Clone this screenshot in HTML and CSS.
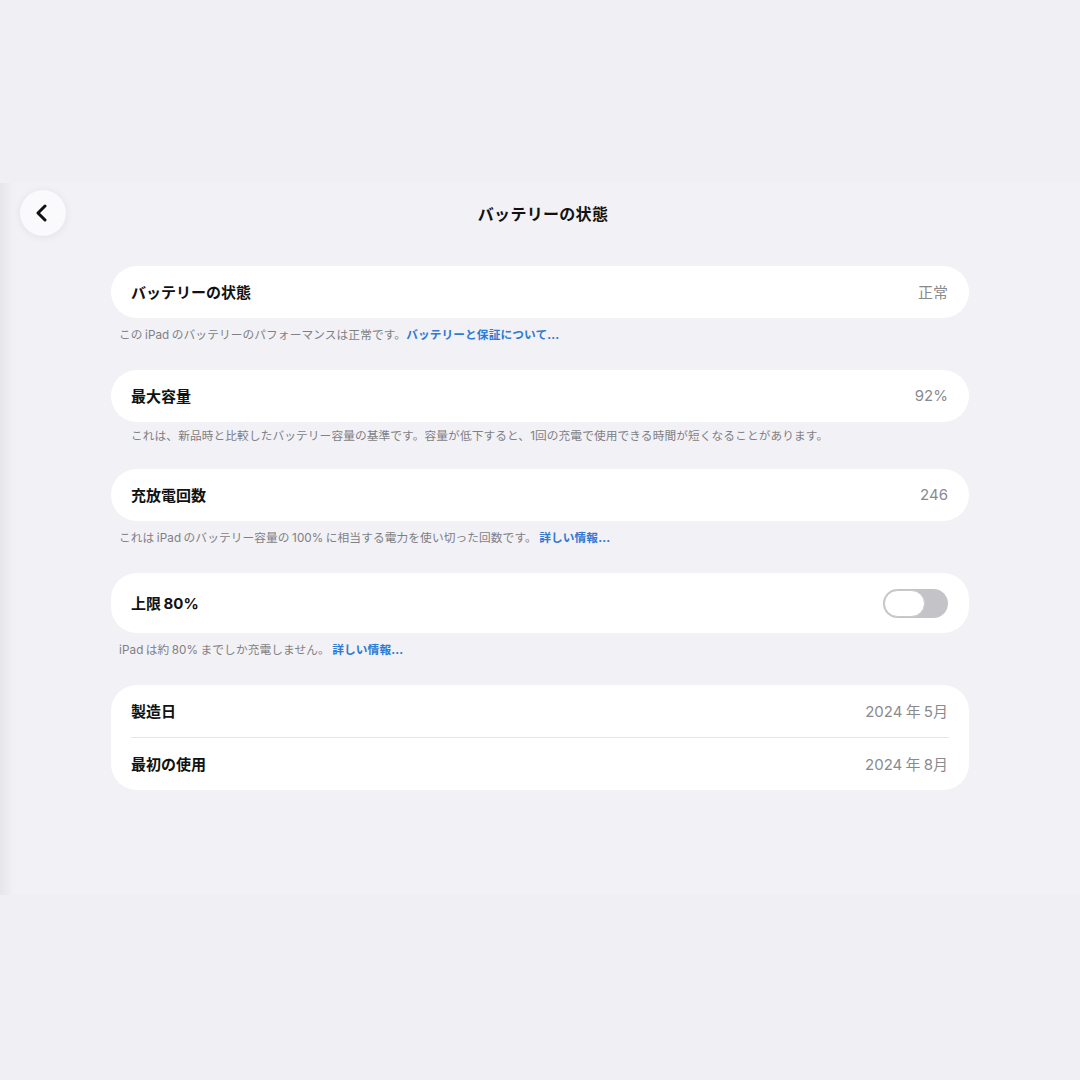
FILE: index.html
```html
<!DOCTYPE html>
<html lang="ja">
<head>
<meta charset="utf-8">
<title>バッテリーの状態</title>
<link rel="stylesheet" href="styles.css">
</head>
<body>
<div class="screen">
  <header class="header">
    <button class="back" aria-label="戻る">
      <svg width="16" height="18" viewBox="0 0 16 18"><path d="M11 2 L4 9 L11 16" fill="none" stroke="#111" stroke-width="3" stroke-linecap="round" stroke-linejoin="round"/></svg>
    </button>
    <h1 class="title">バッテリーの状態</h1>
    <div></div>
  </header>

  <main class="content">
    <section class="group">
      <div class="card">
        <div class="row"><span class="label">バッテリーの状態</span><span class="value">正常</span></div>
      </div>
      <p class="caption">この iPad のバッテリーのパフォーマンスは正常です。<a class="link">バッテリーと保証について...</a></p>
    </section>

    <section class="group g2">
      <div class="card">
        <div class="row"><span class="label">最大容量</span><span class="value">92%</span></div>
      </div>
      <p class="caption indent">これは、新品時と比較したバッテリー容量の基準です。容量が低下すると、1回の充電で使用できる時間が短くなることがあります。</p>
    </section>

    <section class="group">
      <div class="card">
        <div class="row"><span class="label">充放電回数</span><span class="value">246</span></div>
      </div>
      <p class="caption">これは iPad のバッテリー容量の 100% に相当する電力を使い切った回数です。 <a class="link">詳しい情報...</a></p>
    </section>

    <section class="group">
      <div class="card">
        <div class="row tall"><span class="label">上限 80%</span><span class="toggle"><span class="knob"></span></span></div>
      </div>
      <p class="caption">iPad は約 80% までしか充電しません。 <a class="link">詳しい情報...</a></p>
    </section>

    <section class="group">
      <div class="card">
        <div class="row"><span class="label">製造日</span><span class="value">2024 年 5月</span></div>
        <div class="divider"></div>
        <div class="row"><span class="label">最初の使用</span><span class="value">2024 年 8月</span></div>
      </div>
    </section>
  </main>
</div>
</body>
</html>
```

FILE: styles.css
```css
html, body {
  margin: 0;
  padding: 0;
}
body {
  width: 1080px;
  height: 1080px;
  background: #f0eff4;
  font-family: Inter, "Noto Sans CJK JP", "Noto Sans", sans-serif;
  color: #111;
  overflow: hidden;
}
.screen {
  margin-top: 183px;
  height: 712px;
  background: #f2f1f6;
  position: relative;
}
.screen::before {
  content: "";
  position: absolute;
  left: 0;
  top: 0;
  bottom: 0;
  width: 14px;
  background: linear-gradient(to right, #e6e5eb, rgba(242,241,246,0));
}
.header {
  height: 60px;
  display: grid;
  grid-template-columns: 1fr auto 1fr;
  align-items: center;
  padding: 0 0 0 20px;
  position: relative;
}
.back {
  width: 46px;
  height: 46px;
  border-radius: 50%;
  border: none;
  background: #fafafc;
  box-shadow: 0 1px 8px rgba(0,0,0,0.07);
  display: flex;
  align-items: center;
  justify-content: center;
  padding: 0 2px 0 0;
  justify-self: start;
}
.title {
  margin: 0 0 0 -14px;
  font-size: 16px;
  font-weight: 700;
  letter-spacing: 0.3px;
}
.content {
  padding: 23px 111px 0 111px;
}
.card {
  background: #fff;
  border-radius: 26px;
  padding: 0 21px 0 20px;
}
.row {
  height: 52px;
  display: flex;
  align-items: center;
  justify-content: space-between;
}
.row.tall {
  height: 60px;
}
.label {
  font-size: 15px;
  font-weight: 700;
  color: #111;
  position: relative;
  top: -1px;
  word-spacing: -1px;
}
.value {
  font-size: 15px;
  color: #8a8a8e;
  position: relative;
  top: -1px;
  word-spacing: -1px;
}
.divider {
  height: 1px;
  background: #e5e5ea;
  margin-right: -1px;
}
.caption {
  margin: 0 0 27px 0;
  padding: 9px 8px 0 8px;
  font-size: 11.7px;
  line-height: 16px;
  color: #7f7f84;
  letter-spacing: 0.1px;
  word-spacing: -1px;
}
.g2 .caption {
  padding-top: 6px;
  margin-bottom: 25px;
}
.caption.indent {
  padding-left: 20px;
}
.link {
  color: #2f7ad3;
  font-weight: 700;
}
.toggle {
  width: 65px;
  height: 29px;
  border-radius: 15px;
  background: #c4c4c8;
  display: flex;
  align-items: center;
  padding: 0 1px;
  box-sizing: border-box;
}
.knob {
  width: 41px;
  height: 27px;
  border-radius: 14px;
  background: #fff;
  box-sizing: border-box;
  border: 1px solid #c9c9cc;
}
```
